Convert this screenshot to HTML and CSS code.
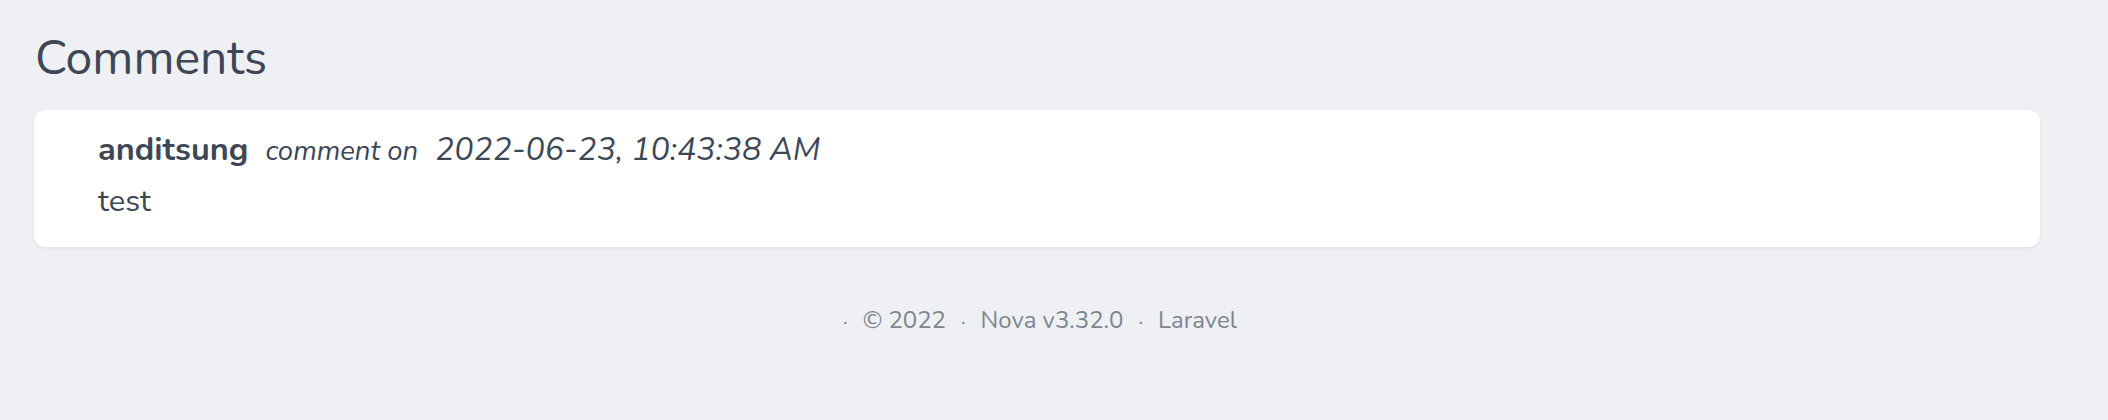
FILE: index.html
```html
<!DOCTYPE html>
<html lang="en">
<head>
<meta charset="utf-8">
<title>Comments</title>
<link rel="stylesheet" href="styles.css">
</head>
<body>
<main class="page">
  <h1 class="title">Comments</h1>
  <section class="card">
    <div class="meta">
      <span class="author">anditsung</span>
      <span class="action">comment on</span>
      <span class="date">2022-06-23, 10:43:38 AM</span>
    </div>
    <p class="body">test</p>
  </section>
  <footer class="footer">
    <span class="sep sep-first">·</span>
    <span>© 2022</span>
    <span class="sep">·</span>
    <span>Nova v3.32.0</span>
    <span class="sep">·</span>
    <span>Laravel</span>
  </footer>
</main>
</body>
</html>
```
FILE: styles.css
```css
html, body {
  margin: 0;
  padding: 0;
}
body {
  background: #eef0f4;
  font-family: "Nunito", Lato, "Noto Sans", sans-serif;
  color: #3d4756;
}
.page {
  padding: 28px 68px 0 34px;
}
.title {
  margin: 0 0 22px;
  padding-left: 1px;
  font-size: 48px;
  font-weight: 400;
  line-height: 60px;
}
.card {
  background: #fff;
  border-radius: 12px;
  box-shadow: 0 2px 4px rgba(0, 0, 0, 0.05);
  padding: 19px 64px 26px;
}
.meta {
  display: flex;
  align-items: baseline;
  gap: 17px;
  line-height: 40px;
}
.author {
  font-size: 32.5px;
  font-weight: 700;
}
.action {
  font-size: 27.5px;
  font-style: italic;
}
.date {
  font-size: 32px;
  font-style: italic;
}
.body {
  margin: 10px 0 0;
  font-size: 31px;
  line-height: 40px;
}
.footer {
  margin-top: 55px;
  display: flex;
  justify-content: center;
  align-items: baseline;
  gap: 15px;
  font-size: 24px;
  line-height: 36px;
  color: #7c858e;
}
.sep {
  font-size: 20px;
}
.sep-first {
  margin-left: 6px;
}
```
